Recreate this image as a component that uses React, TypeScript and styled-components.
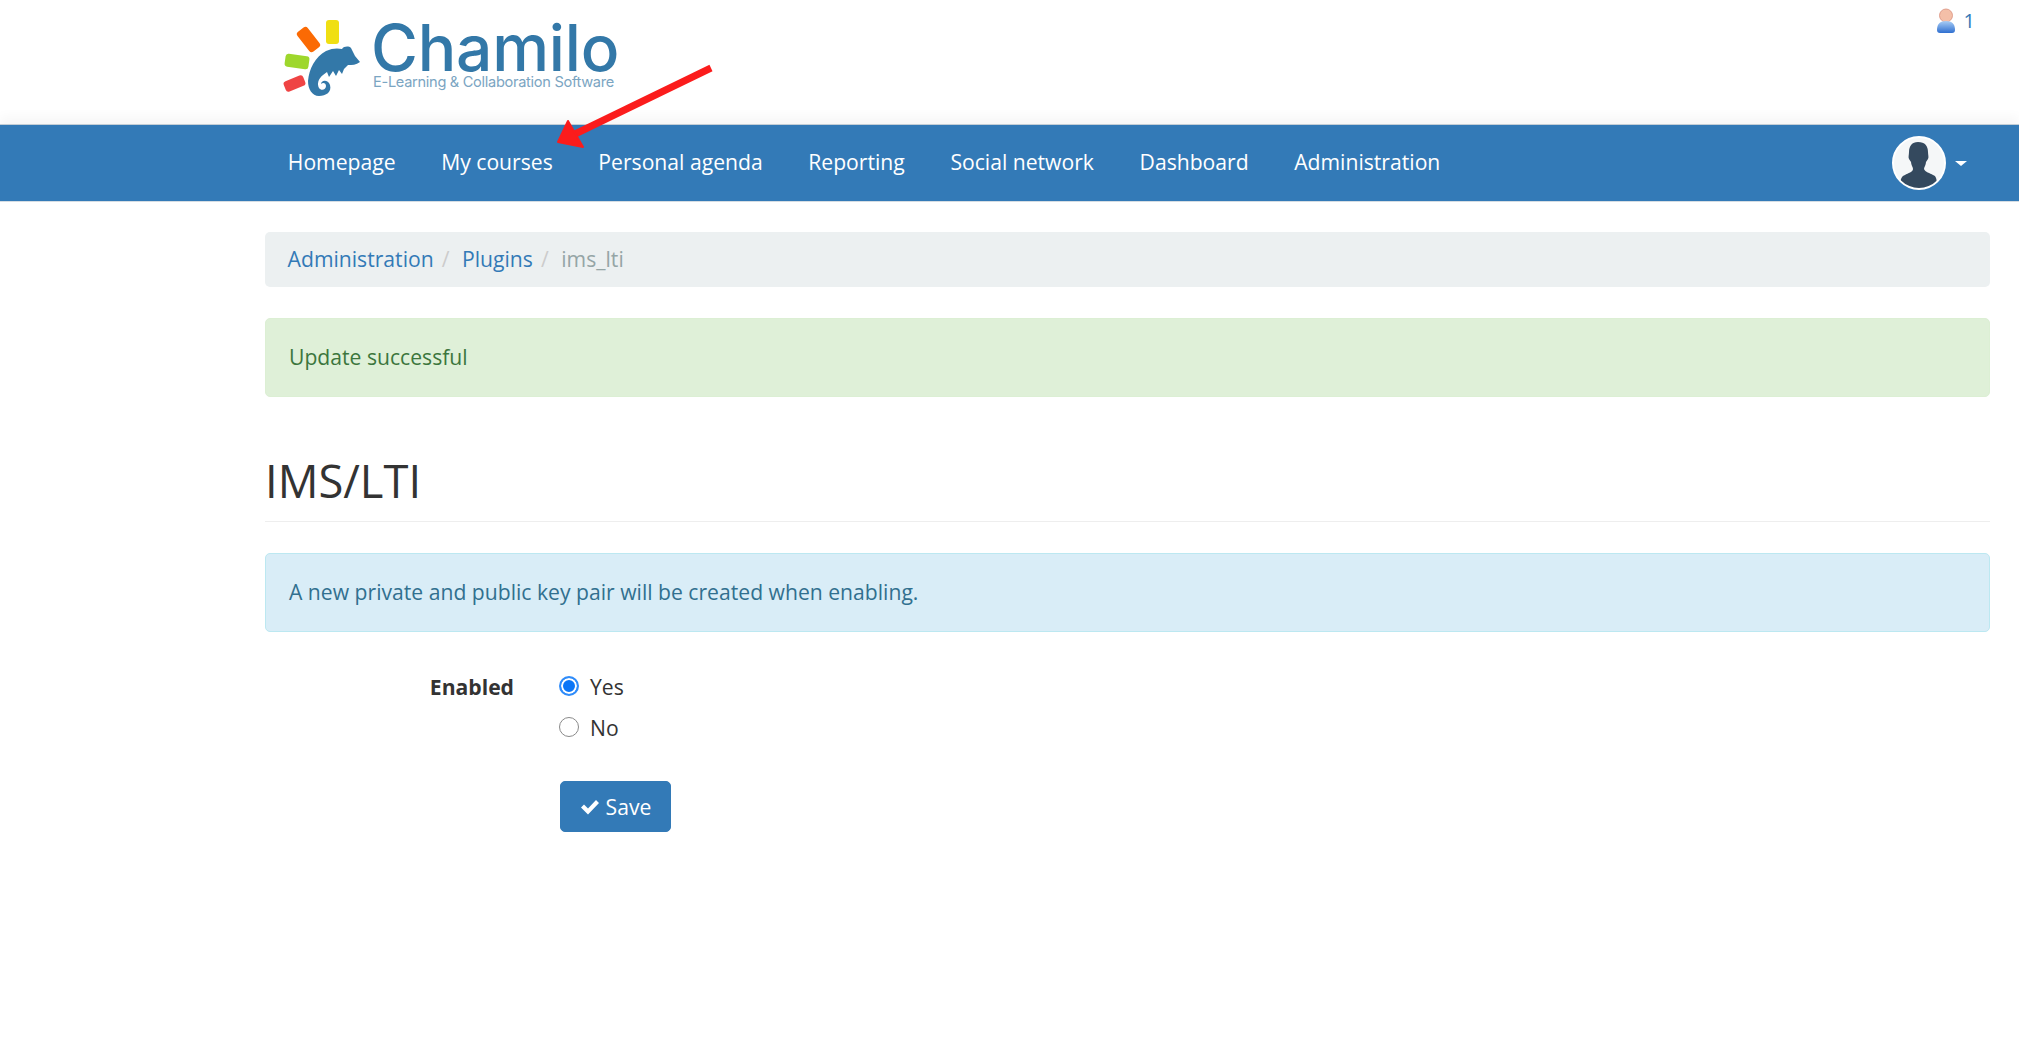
import styled, {createGlobalStyle} from 'styled-components'

const GlobalStyle = createGlobalStyle`
  html, body {
    margin: 0;
    padding: 0;
    background: #fff;
    color: #333;
    font-family: "Open Sans", "Liberation Sans", sans-serif;
    font-size: 21.15px;
    line-height: 26px;
  }
`

const Page = styled.div`
  position: relative;
  width: 2019px;
  height: 1050px;
  overflow: hidden;
`
const Header = styled.header`
  height: 124px;
  display: flex;
  justify-content: space-between;
  padding: 0 44px 0 282px;
  box-sizing: border-box;
`
const Logo = styled.div`
  display: flex;
  align-items: flex-start;
  padding-top: 19px;
  color: #3378a8;
`
const LogoText = styled.div`
  margin-left: 11px;
  padding-top: 3px;
  display: flex;
  flex-direction: column;
`
const LogoName = styled.span`
  font-family: Inter, "Liberation Sans", sans-serif;
  font-weight: 500;
  font-size: 64px;
  line-height: 52px;
  letter-spacing: -0.2px;
`
const LogoTagline = styled.span`
  font-family: Inter, "Liberation Sans", sans-serif;
  font-size: 14.6px;
  line-height: 16px;
  letter-spacing: -0.3px;
  color: #7ba5c2;
  margin-left: 2px;
`
const UserCount = styled.a`
  display: flex;
  align-items: flex-start;
  gap: 8px;
  padding-top: 8px;
  color: #337ab7;
  font-size: 20px;
  line-height: 26px;
`
const Navbar = styled.nav`
  height: 78px;
  background: #337ab7;
  border-top: 1px solid #c4ced6;
  border-bottom: 1px solid #d5dde3;
  box-sizing: border-box;
  display: flex;
  align-items: center;
  justify-content: space-between;
  padding: 0 52px 0 265px;
  box-shadow: 0 -8px 10px rgba(0, 0, 0, 0.03);
`
const NavLinks = styled.div`
  display: flex;
  padding-bottom: 3px;
`
const NavLink = styled.a`
  color: #fff;
  line-height: 26px;
  padding: 0 22.8px;
`
const Profile = styled.div`
  display: flex;
  align-items: center;
  gap: 9px;
`
const Avatar = styled.div`
  width: 54px;
  height: 54px;
  border-radius: 50%;
  border: 2px solid #fff;
  box-sizing: border-box;
  background: #f5f7f8;
  overflow: hidden;
  display: flex;
`
const Caret = styled.span`
  width: 0;
  height: 0;
  border-left: 6px solid transparent;
  border-right: 6px solid transparent;
  border-top: 5px solid #fff;
`
const Main = styled.main`
  margin: 30px 29px 0 265px;
`
const Breadcrumb = styled.ol`
  margin: 0 0 31px;
  list-style: none;
  height: 55px;
  padding: 0 22.6px 2px;
  box-sizing: border-box;
  display: flex;
  align-items: center;
  background: #ecf0f1;
  border-radius: 5px;
`
const Crumb = styled.li`
  color: #95a5a6;
  & + &::before {
    content: "/";
    color: #ccc;
    padding: 0 12.6px 0 8px;
  }
  a {
    color: #337ab7;
  }
`
const Alert = styled.div<{$variant: 'success' | 'info'}>`
  height: 79px;
  box-sizing: border-box;
  border: 1px solid ${p => (p.$variant === 'success' ? '#dcefd4' : '#bce8f1')};
  background: ${p => (p.$variant === 'success' ? '#dff0d8' : '#d9edf7')};
  color: ${p => (p.$variant === 'success' ? '#3c763d' : '#31708f')};
  border-radius: 5px;
  padding: 0 23px 2px;
  display: flex;
  align-items: center;
`
const PageHeader = styled.div`
  margin: 52px 0 31px;
  height: 72px;
  border-bottom: 1px solid #eee;
`
const Title = styled.h1`
  margin: 0;
  font-size: 45.3px;
  line-height: 64px;
  font-weight: 400;
  color: #333;
`
const Form = styled.form`
  margin-top: 38px;
  display: grid;
  grid-template-columns: 249px 1fr;
  column-gap: 46px;
`
const FieldLabel = styled.label`
  text-align: right;
  font-weight: 700;
  line-height: 34px;
  color: #333;
`
const Options = styled.div`
  display: flex;
  flex-direction: column;
  gap: 7px;
`
const Option = styled.label`
  display: flex;
  align-items: center;
  gap: 11px;
  line-height: 34px;
  color: #333;
`
const Radio = styled.span<{$checked?: boolean}>`
  width: 20px;
  height: 20px;
  margin-top: -2px;
  margin-left: -1px;
  border-radius: 50%;
  box-sizing: border-box;
  background: ${p => (p.$checked ? '#0b76f7' : '#fff')};
  border: ${p => (p.$checked ? '2px solid #2f8cfa' : '1.5px solid #8a8a8a')};
  box-shadow: ${p => (p.$checked ? 'inset 0 0 0 2px #fff' : 'none')};
`
const SaveButton = styled.button`
  grid-column: 2;
  justify-self: start;
  margin-top: 36px;
  width: 111px;
  height: 51px;
  display: flex;
  align-items: center;
  justify-content: center;
  gap: 6px;
  border: 1px solid #337ab7;
  border-radius: 5px;
  background: #337ab7;
  color: #fff;
  font-family: inherit;
  font-size: 21.15px;
  padding: 0;
`
const ArrowOverlay = styled.svg`
  position: absolute;
  left: 550px;
  top: 60px;
`

const LogoMark = () => (
  <svg width="78" height="78" viewBox="0 0 78 78">
    <rect x="44" y="1" width="13" height="24" rx="3" fill="#f0df12" />
    <rect x="20" y="8" width="13" height="25" rx="3" fill="#fb6a04" transform="rotate(-38 26.5 20.5)" />
    <rect x="3" y="36" width="24" height="13" rx="3" fill="#9ed72c" transform="rotate(8 15 42.5)" />
    <rect x="2" y="59" width="21" height="11" rx="3" fill="#ef4444" transform="rotate(-22 12.5 64.5)" />
    <path
      d="M26 62C27 50 33 38 44 32C50 29 56 29 60 30C62 27 67 27 69 29L73 37L78 43C74 46 70 46 66 46L62 50L60 55L57 51L54 57L51 52L47 58L45 53L41 56C36 60 35 65 37 69C39 72 44 71 44 67C44 64 41 63 39 65C39 61 46 60 48 66C50 73 44 77 37 77C30 77 26 70 26 62Z"
      fill="#3378a8"
    />
  </svg>
)

const UserIcon = () => (
  <svg width="20" height="26" viewBox="0 0 20 26">
    <defs>
      <linearGradient id="userBody" x1="0" y1="0" x2="0" y2="1">
        <stop offset="0" stopColor="#a9cdf5" />
        <stop offset="1" stopColor="#2f6fd0" />
      </linearGradient>
    </defs>
    <circle cx="10" cy="7.5" r="6.5" fill="#f4bfa8" stroke="#d98f7c" strokeWidth="0.8" />
    <path d="M1 22c0-6 3-9 9-9s9 3 9 9c0 2-1 3-3 3H4c-2 0-3-1-3-3z" fill="url(#userBody)" />
  </svg>
)

const Silhouette = () => (
  <svg width="50" height="50" viewBox="0 0 50 50">
    <path
      d="M24 4c7 0 10 4 10 10 0 3 1 5 0 7l-2 3c0 3-2 5-2 7 1 3 6 4 9 6 3 1 4 3 4 13H6c0-10 2-12 5-13 3-2 8-3 8-6 0-2-2-4-2-7l-2-3c-1-2 0-4 0-7 0-6 3-10 9-10z"
      fill="#34495e"
    />
  </svg>
)

const navItems = [
  'Homepage',
  'My courses',
  'Personal agenda',
  'Reporting',
  'Social network',
  'Dashboard',
  'Administration',
]

export default function App() {
  return (
    <Page>
      <GlobalStyle />
      <Header>
        <Logo>
          <LogoMark />
          <LogoText>
            <LogoName>Chamilo</LogoName>
            <LogoTagline>E-Learning &amp; Collaboration Software</LogoTagline>
          </LogoText>
        </Logo>
        <UserCount>
          <UserIcon />1
        </UserCount>
      </Header>
      <Navbar>
        <NavLinks>
          {navItems.map(item => (
            <NavLink key={item}>{item}</NavLink>
          ))}
        </NavLinks>
        <Profile>
          <Avatar>
            <Silhouette />
          </Avatar>
          <Caret />
        </Profile>
      </Navbar>
      <Main>
        <Breadcrumb>
          <Crumb>
            <a>Administration</a>
          </Crumb>
          <Crumb>
            <a>Plugins</a>
          </Crumb>
          <Crumb>ims_lti</Crumb>
        </Breadcrumb>
        <Alert $variant="success">Update successful</Alert>
        <PageHeader>
          <Title>IMS/LTI</Title>
        </PageHeader>
        <Alert $variant="info">A new private and public key pair will be created when enabling.</Alert>
        <Form>
          <FieldLabel>Enabled</FieldLabel>
          <Options>
            <Option>
              <Radio $checked />
              Yes
            </Option>
            <Option>
              <Radio />
              No
            </Option>
          </Options>
          <SaveButton type="button">
            <svg width="20" height="16" viewBox="0 0 20 16">
              <path d="M1 8.5l3-3 4 4 8-8.5 3 3-11 11.5z" fill="#fff" />
            </svg>
            Save
          </SaveButton>
        </Form>
      </Main>
      <ArrowOverlay width="170" height="100" viewBox="0 0 170 100">
        <path d="M161 8L25 74" stroke="#fb1c1c" strokeWidth="7" />
        <path d="M8 82L18 61L33 87Z" fill="#fb1c1c" stroke="#fb1c1c" strokeWidth="2" strokeLinejoin="round" />
      </ArrowOverlay>
    </Page>
  )
}
